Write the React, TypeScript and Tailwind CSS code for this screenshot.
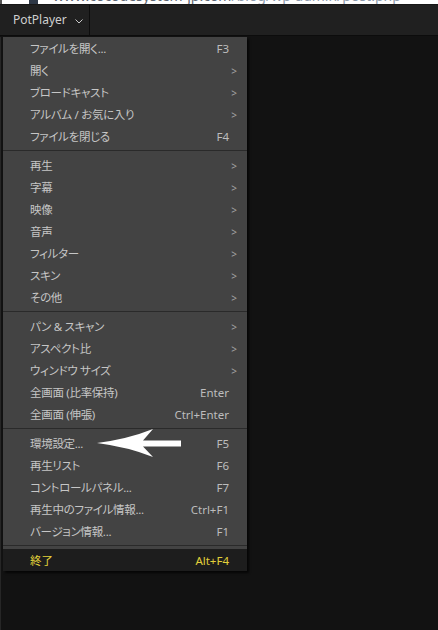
import { Fragment } from "react";

interface MenuItem {
  label: string;
  shortcut?: string;
  sub?: boolean;
}

const sections: MenuItem[][] = [
  [
    { label: "ファイルを開く...", shortcut: "F3" },
    { label: "開く", sub: true },
    { label: "ブロードキャスト", sub: true },
    { label: "アルバム / お気に入り", sub: true },
    { label: "ファイルを閉じる", shortcut: "F4" },
  ],
  [
    { label: "再生", sub: true },
    { label: "字幕", sub: true },
    { label: "映像", sub: true },
    { label: "音声", sub: true },
    { label: "フィルター", sub: true },
    { label: "スキン", sub: true },
    { label: "その他", sub: true },
  ],
  [
    { label: "パン & スキャン", sub: true },
    { label: "アスペクト比", sub: true },
    { label: "ウィンドウ サイズ", sub: true },
    { label: "全画面 (比率保持)", shortcut: "Enter" },
    { label: "全画面 (伸張)", shortcut: "Ctrl+Enter" },
  ],
  [
    { label: "環境設定...", shortcut: "F5" },
    { label: "再生リスト", shortcut: "F6" },
    { label: "コントロールパネル...", shortcut: "F7" },
    { label: "再生中のファイル情報...", shortcut: "Ctrl+F1" },
    { label: "バージョン情報...", shortcut: "F1" },
  ],
];

function Row({ item }: { item: MenuItem }) {
  return (
    <div className="flex h-[22px] items-center pl-[27px] pr-[10px] pt-px text-[#c6c6c6]">
      <span className="flex-1 whitespace-nowrap tracking-[-0.3px]">{item.label}</span>
      {item.shortcut && <span className="mr-[8px] whitespace-nowrap text-[#bdbdbd]">{item.shortcut}</span>}
      {item.sub && <span className="text-[10px] leading-none text-[#a4a4a4]">&gt;</span>}
    </div>
  );
}

function Separator() {
  return <div className="my-[3px] h-px bg-[#2a2a2a]" />;
}

export default function App() {
  return (
    <div className="relative h-[630px] w-[438px] overflow-hidden bg-[#121212] font-['Noto_Sans','Noto_Sans_CJK_JP',sans-serif] [font-feature-settings:'palt']">
      {/* ブラウザのアドレスバーの切れ端 */}
      <div className="relative h-[4px] overflow-hidden bg-white">
        <div className="absolute left-0 top-0 h-[4px] w-[2px] bg-[#555]" />
        <div className="absolute left-[29px] top-0 h-[4px] w-[9px] bg-[#2e3846]" />
        <div className="absolute left-[53px] top-[-11px] whitespace-nowrap text-[14px] leading-[14px]">
          <span className="text-[#5d6673]">www.cocodesystem-jp.com</span>
          <span className="text-[#8c99ab]">/blog/wp-admin/post.php</span>
        </div>
      </div>
      <div className="h-px bg-[#171717]" />

      {/* タイトルバー */}
      <div className="flex h-[31px] border-b border-[#0c0c0c] bg-[#202020]">
        <div className="flex w-[90px] items-center border-r border-[#0d0d0d] pl-[13px] text-[12px] text-[#cfcfcf]">
          <span>PotPlayer</span>
          <svg className="ml-[8px] mt-[2px]" width="8" height="5" viewBox="0 0 8 5" fill="none">
            <path d="M0.5 0.5 L4 4 L7.5 0.5" stroke="#c8c8c8" strokeWidth="1" />
          </svg>
        </div>
      </div>

      <div className="absolute bottom-0 left-0 top-[37px] w-px bg-[#262626]" />

      {/* メニュー */}
      <div className="absolute left-[3px] top-[37px] w-[244px] bg-[#434343] text-[11.5px] shadow-[2px_2px_2px_rgba(0,0,0,0.7)]">
        {sections.map((items, i) => (
          <Fragment key={i}>
            {items.map((item) => (
              <Row key={item.label} item={item} />
            ))}
            <Separator />
          </Fragment>
        ))}
        <div className="flex h-[22px] items-center bg-[#1d1d1d] pl-[27px] pr-[10px] pt-px text-[#e2d13a]">
          <span className="flex-1">終了</span>
          <span className="mr-[8px]">Alt+F4</span>
        </div>
      </div>

      {/* 矢印 */}
      <svg className="absolute left-0 top-0" width="438" height="630" viewBox="0 0 438 630">
        <path d="M97 443 Q128 439 153 429 L143 440.5 L181 440.5 L181 446.5 L143 446.5 L153 457 Q128 447 97 443 Z" fill="#ffffff" />
      </svg>
    </div>
  );
}
